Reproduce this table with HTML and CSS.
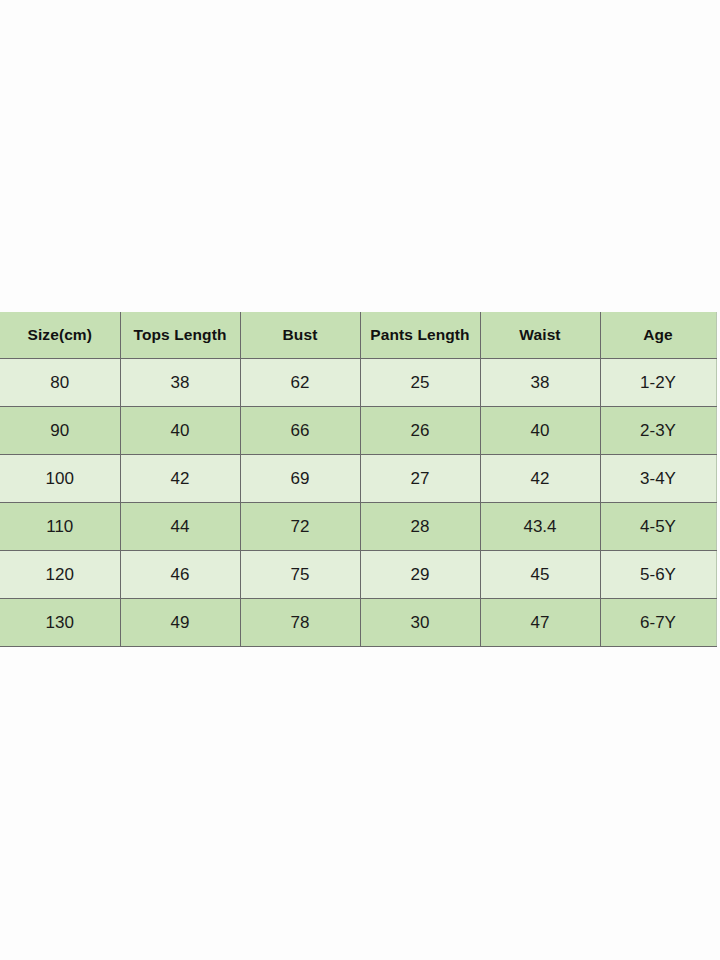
FILE: index.html
```html
<!DOCTYPE html>
<html>
<head>
<meta charset="utf-8">
<link rel="stylesheet" href="styles.css">
</head>
<body>
<div class="page">
  <table class="size-table">
    <colgroup>
      <col class="col"><col class="col"><col class="col"><col class="col"><col class="col"><col class="col-last">
    </colgroup>
    <thead>
      <tr>
        <th>Size(cm)</th><th>Tops Length</th><th>Bust</th><th>Pants Length</th><th>Waist</th><th>Age</th>
      </tr>
    </thead>
    <tbody>
      <tr class="light"><td>80</td><td>38</td><td>62</td><td>25</td><td>38</td><td>1-2Y</td></tr>
      <tr class="green"><td>90</td><td>40</td><td>66</td><td>26</td><td>40</td><td>2-3Y</td></tr>
      <tr class="light"><td>100</td><td>42</td><td>69</td><td>27</td><td>42</td><td>3-4Y</td></tr>
      <tr class="green"><td>110</td><td>44</td><td>72</td><td>28</td><td>43.4</td><td>4-5Y</td></tr>
      <tr class="light"><td>120</td><td>46</td><td>75</td><td>29</td><td>45</td><td>5-6Y</td></tr>
      <tr class="green"><td>130</td><td>49</td><td>78</td><td>30</td><td>47</td><td>6-7Y</td></tr>
    </tbody>
  </table>
</div>
</body>
</html>
```
FILE: styles.css
```css
html, body {
  margin: 0;
  padding: 0;
  background: #fdfdfd;
}
.page {
  width: 720px;
  height: 960px;
  padding-top: 312px;
  box-sizing: border-box;
}
.size-table {
  width: 716px;
  border-collapse: collapse;
  table-layout: fixed;
  font-family: "Liberation Sans", Arial, sans-serif;
  color: #1a1a1a;
}
.col {
  width: 120px;
}
.col-last {
  width: 116px;
}
.size-table th,
.size-table td {
  text-align: center;
  vertical-align: middle;
  border-left: 1px solid #6a6a6a;
  border-bottom: 1px solid #6a6a6a;
  padding: 0;
}
.size-table th:first-child,
.size-table td:first-child {
  border-left: none;
}
.size-table th:last-child,
.size-table td:last-child {
  border-right: 1px solid #b8c8b0;
}
.size-table th {
  height: 46px;
  background: #c6e0b4;
  font-weight: bold;
  font-size: 15.5px;
  letter-spacing: 0.1px;
  color: #111;
}
.size-table td {
  height: 47px;
  font-size: 17px;
}
.light td {
  background: #e3efda;
}
.green td {
  background: #c6e0b4;
}
```
